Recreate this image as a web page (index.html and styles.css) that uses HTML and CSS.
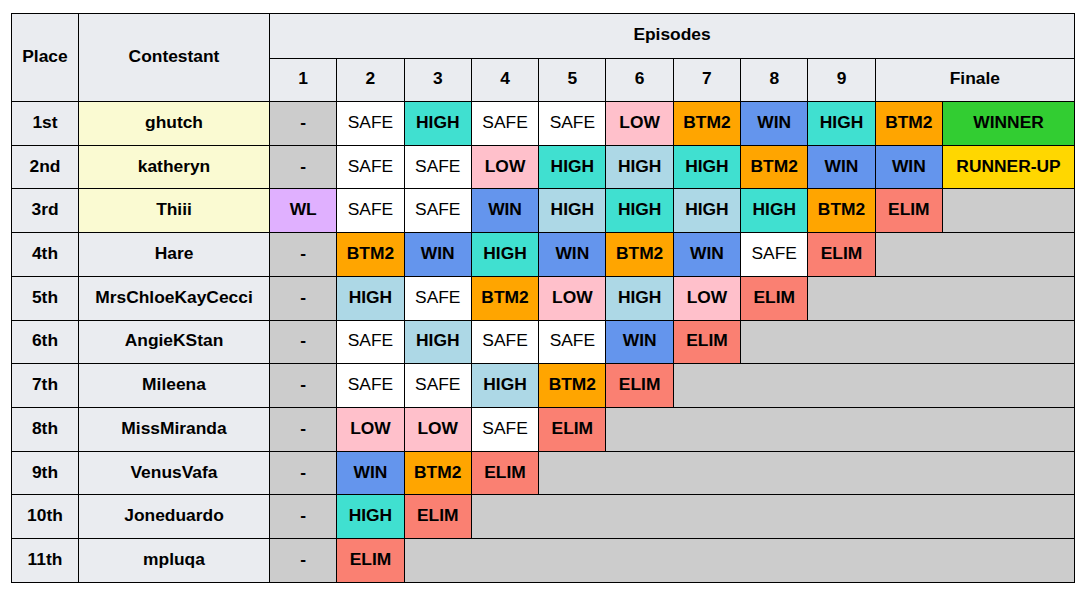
FILE: index.html
```html
<!DOCTYPE html>
<html lang="en">
<head>
<meta charset="utf-8">
<title>Contestant progress</title>
<link rel="stylesheet" href="styles.css">
</head>
<body>
<div class="page">
<table class="progress">
  <colgroup>
    <col class="c-place">
    <col class="c-name">
    <col class="c-ep"><col class="c-ep"><col class="c-ep"><col class="c-ep"><col class="c-ep">
    <col class="c-ep"><col class="c-ep"><col class="c-ep"><col class="c-ep"><col class="c-ep">
    <col class="c-final">
  </colgroup>
  <thead>
    <tr class="h1">
      <th rowspan="2">Place</th>
      <th rowspan="2">Contestant</th>
      <th colspan="11">Episodes</th>
    </tr>
    <tr class="h2">
      <th>1</th><th>2</th><th>3</th><th>4</th><th>5</th><th>6</th><th>7</th><th>8</th><th>9</th>
      <th colspan="2">Finale</th>
    </tr>
  </thead>
  <tbody>
    <tr>
      <th>1st</th><th class="top">ghutch</th>
      <td class="na">-</td><td class="safe">SAFE</td><td class="high">HIGH</td><td class="safe">SAFE</td><td class="safe">SAFE</td><td class="low">LOW</td><td class="btm">BTM2</td><td class="win">WIN</td><td class="high">HIGH</td><td class="btm">BTM2</td><td class="winner">WINNER</td>
    </tr>
    <tr>
      <th>2nd</th><th class="top">katheryn</th>
      <td class="na">-</td><td class="safe">SAFE</td><td class="safe">SAFE</td><td class="low">LOW</td><td class="high">HIGH</td><td class="high2">HIGH</td><td class="high">HIGH</td><td class="btm">BTM2</td><td class="win">WIN</td><td class="win">WIN</td><td class="runner">RUNNER-UP</td>
    </tr>
    <tr>
      <th>3rd</th><th class="top">Thiii</th>
      <td class="wl">WL</td><td class="safe">SAFE</td><td class="safe">SAFE</td><td class="win">WIN</td><td class="high2">HIGH</td><td class="high">HIGH</td><td class="high2">HIGH</td><td class="high">HIGH</td><td class="btm">BTM2</td><td class="elim">ELIM</td><td class="out"></td>
    </tr>
    <tr>
      <th>4th</th><th>Hare</th>
      <td class="na">-</td><td class="btm">BTM2</td><td class="win">WIN</td><td class="high">HIGH</td><td class="win">WIN</td><td class="btm">BTM2</td><td class="win">WIN</td><td class="safe">SAFE</td><td class="elim">ELIM</td><td class="out" colspan="2"></td>
    </tr>
    <tr>
      <th>5th</th><th>MrsChloeKayCecci</th>
      <td class="na">-</td><td class="high2">HIGH</td><td class="safe">SAFE</td><td class="btm">BTM2</td><td class="low">LOW</td><td class="high2">HIGH</td><td class="low">LOW</td><td class="elim">ELIM</td><td class="out" colspan="3"></td>
    </tr>
    <tr>
      <th>6th</th><th>AngieKStan</th>
      <td class="na">-</td><td class="safe">SAFE</td><td class="high2">HIGH</td><td class="safe">SAFE</td><td class="safe">SAFE</td><td class="win">WIN</td><td class="elim">ELIM</td><td class="out" colspan="4"></td>
    </tr>
    <tr>
      <th>7th</th><th>Mileena</th>
      <td class="na">-</td><td class="safe">SAFE</td><td class="safe">SAFE</td><td class="high2">HIGH</td><td class="btm">BTM2</td><td class="elim">ELIM</td><td class="out" colspan="5"></td>
    </tr>
    <tr>
      <th>8th</th><th>MissMiranda</th>
      <td class="na">-</td><td class="low">LOW</td><td class="low">LOW</td><td class="safe">SAFE</td><td class="elim">ELIM</td><td class="out" colspan="6"></td>
    </tr>
    <tr>
      <th>9th</th><th>VenusVafa</th>
      <td class="na">-</td><td class="win">WIN</td><td class="btm">BTM2</td><td class="elim">ELIM</td><td class="out" colspan="7"></td>
    </tr>
    <tr>
      <th>10th</th><th>Joneduardo</th>
      <td class="na">-</td><td class="high">HIGH</td><td class="elim">ELIM</td><td class="out" colspan="8"></td>
    </tr>
    <tr>
      <th>11th</th><th>mpluqa</th>
      <td class="na">-</td><td class="elim">ELIM</td><td class="out" colspan="9"></td>
    </tr>
  </tbody>
</table>
</div>
</body>
</html>
```

FILE: styles.css
```css
html, body {
  margin: 0;
  padding: 0;
  background: #ffffff;
}

.page {
  padding: 13px 0 0 11px;
}

.progress {
  border-collapse: collapse;
  table-layout: fixed;
  width: 1063px;
  font-family: "Liberation Sans", Arial, sans-serif;
  font-size: 17.4px;
  color: #000000;
  border: 1px solid #000000;
}

.c-place { width: 67px; }
.c-name { width: 191px; }
.c-ep { width: 67.3px; }
.c-final { width: 132px; }

.progress th,
.progress td {
  border: 1px solid #000000;
  padding: 0 0 2px 0;
  text-align: center;
  vertical-align: middle;
  white-space: nowrap;
}

.progress th {
  background: #eaecf0;
  font-weight: bold;
}

.progress td {
  font-weight: bold;
}

.h1 { height: 44.7px; }
.h2 { height: 43.3px; }
.progress tbody tr { height: 43.73px; }

.progress th.top { background: #fafad2; }

.progress td.na { background: #cccccc; }
.progress td.out { background: #cccccc; }
.progress td.safe { background: #ffffff; font-weight: normal; }
.progress td.high { background: #40e0d0; }
.progress td.high2 { background: #add8e6; }
.progress td.low { background: #ffc0cb; }
.progress td.btm { background: #ffa500; }
.progress td.win { background: #6495ed; }
.progress td.elim { background: #fa8072; }
.progress td.wl { background: #e0b0ff; }
.progress td.winner { background: #32cd32; }
.progress td.runner { background: #ffd700; }
```
